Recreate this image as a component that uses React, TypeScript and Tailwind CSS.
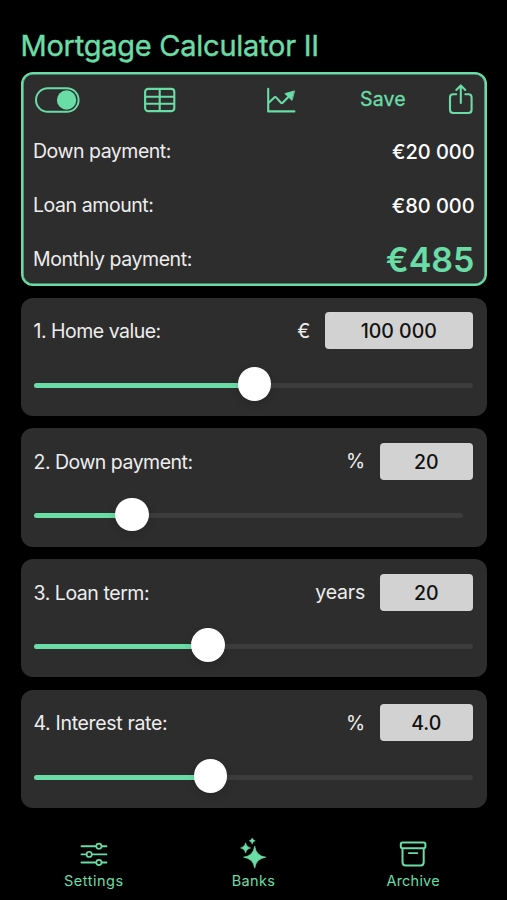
import React from 'react';

const green = '#6adca6';

function ToggleIcon() {
  return (
    <svg width="46" height="30" viewBox="0 0 46 30" fill="none" className="shrink-0">
      <rect x="2" y="3.2" width="42.6" height="23.6" rx="11.8" stroke={green} strokeWidth="2" />
      <circle cx="32.6" cy="15" r="9.7" fill={green} />
    </svg>
  );
}

function TableIcon() {
  return (
    <svg width="34" height="30" viewBox="0 0 34 30" fill="none" stroke={green} strokeWidth="2.1" className="shrink-0">
      <rect x="2.1" y="3.9" width="29.2" height="22.2" rx="3" />
      <path d="M2 11.8H31.5M2 18.8H31.5M16.7 4V26" />
    </svg>
  );
}

function ChartIcon() {
  return (
    <svg width="34" height="30" viewBox="0 0 34 30" fill="none" stroke={green} strokeWidth="2.1" strokeLinecap="round" strokeLinejoin="round" className="shrink-0">
      <path d="M3.2 3.8V26.4H29.4" />
      <path d="M4 17.4L9.3 12.4Q10.2 11.6 11.1 12.4L16 17.8Q16.8 18.6 17.7 17.8L25 10.3" />
      <path d="M29.3 6L19.8 8.6L26.8 15.2Z" fill={green} strokeWidth="0.8" />
    </svg>
  );
}

function ShareIcon() {
  return (
    <svg width="28" height="34" viewBox="0 0 28 34" fill="none" stroke={green} strokeWidth="2.1" strokeLinecap="round" strokeLinejoin="round" className="shrink-0">
      <path d="M9.2 11.2H6.2Q3 11.2 3 14.4V26.8Q3 30 6.2 30H21.4Q24.6 30 24.6 26.8V14.4Q24.6 11.2 21.4 11.2H18.4" />
      <path d="M13.8 20V2.6M9.3 7L13.8 2.4L18.3 7" />
    </svg>
  );
}

function SettingsIcon() {
  return (
    <svg width="28" height="24" viewBox="0 0 28 24" fill="none" stroke={green} strokeWidth="1.9" strokeLinecap="round">
      <path d="M1.5 4.2H16M21.8 4.2H26.4M1.5 12.4H6.3M12 12.4H26.4M1.5 20.5H16M21.8 20.5H26.4" />
      <circle cx="18.9" cy="4.2" r="2.6" strokeWidth="1.6" />
      <circle cx="9.2" cy="12.4" r="2.6" strokeWidth="1.6" />
      <circle cx="18.9" cy="20.5" r="2.6" strokeWidth="1.6" />
    </svg>
  );
}

function BanksIcon() {
  return (
    <svg width="28" height="32" viewBox="0 0 28 32" fill={green}>
      <path d="M15.7 8.2Q17.2 18 26.8 19.2Q17.2 20.4 15.7 30.2Q14.2 20.4 4.6 19.2Q14.2 18 15.7 8.2Z" stroke={green} strokeWidth="0.7" />
      <path d="M6.6 4.6Q7.4 9.1 11.8 9.9Q7.4 10.7 6.6 15.2Q5.8 10.7 1.4 9.9Q5.8 9.1 6.6 4.6Z" stroke={green} strokeWidth="0.4" />
      <path d="M13.2 -0.4Q13.8 2.3 16.4 2.8Q13.8 3.4 13.2 6.2Q12.6 3.4 10 2.8Q12.6 2.3 13.2 -0.4Z" stroke={green} strokeWidth="0.3" />
    </svg>
  );
}

function ArchiveIcon() {
  return (
    <svg width="28" height="26" viewBox="0 0 28 26" fill="none" stroke={green} strokeWidth="2" strokeLinejoin="round">
      <rect x="1.8" y="1.5" width="24.6" height="5.8" rx="1.8" />
      <path d="M3.5 7.3V21.2Q3.5 24.4 6.7 24.4H21.5Q24.7 24.4 24.7 21.2V7.3" />
      <path d="M9.8 12.1H18.4" strokeLinecap="round" strokeWidth="1.8" />
    </svg>
  );
}

type SliderCardProps = {
  label: string;
  labelClass: string;
  unit: string;
  value: string;
  boxClass: string;
  trackClass: string;
  knob: number;
};

function SliderCard({ label, labelClass, unit, value, boxClass, trackClass, knob }: SliderCardProps) {
  return (
    <section className="h-[118.3px] shrink-0 rounded-[12px] bg-[#2d2d2d] pl-[13px] pr-[13.5px] pt-[14.5px]">
      <div className="flex h-[37px] items-center">
        <span className={'pt-[2px] text-[19.5px] text-[#ededed] ' + labelClass}>{label}</span>
        <span className="ml-auto mr-[14.5px] pt-[1px] text-[19.5px] tracking-[-0.2px] text-[#ededed]">{unit}</span>
        <div className={'flex h-[37px] items-center justify-center rounded-[4px] bg-[#d2d2d2] pt-[2px] text-[19.5px] font-medium text-[#111] ' + boxClass}>
          {value}
        </div>
      </div>
      <div className={'mt-[18px] flex h-[33px] items-center ' + trackClass}>
        <div className="mt-[3px] h-[5px] rounded-l-full bg-[#6adca6]" style={{ width: knob - 16 }} />
        <div className="z-10 -mx-px size-[33.5px] shrink-0 rounded-full bg-white shadow-[0_3px_8px_rgba(0,0,0,0.15)]" />
        <div className="mt-[3px] h-[5px] flex-1 rounded-r-full bg-[#3c3c3c]" />
      </div>
    </section>
  );
}

export default function App() {
  return (
    <div className="flex h-[900px] w-[507px] flex-col overflow-hidden whitespace-nowrap bg-black px-[20.5px] pt-[27px] font-['Inter','Liberation_Sans',sans-serif]">
      <h1 className="h-[45px] text-[29px] leading-[37px] tracking-[-0.25px] text-[#6adca6] [-webkit-text-stroke:0.4px_#6adca6]">
        <span>Mortgage Calculator II</span>
      </h1>

      <section className="h-[213.5px] shrink-0 rounded-[12px] border-2 border-[#6adca6] bg-[#2d2d2d] pl-[10.5px] pr-[10px] shadow-[inset_0_0_0_0.6px_#6adca6]">
        <div className="flex h-[50px] items-center pl-[1px] pt-[1px]">
          <ToggleIcon />
          <div className="ml-[63px] flex"><TableIcon /></div>
          <div className="ml-[88px] flex"><ChartIcon /></div>
          <span className="ml-[61px] pt-[1px] text-[19.5px] tracking-[0.15px] text-[#6adca6] [-webkit-text-stroke:0.3px_#6adca6]">Save</span>
          <div className="-mr-[0.5px] ml-auto flex"><ShareIcon /></div>
        </div>
        <div className="flex h-[53.7px] items-center justify-between pt-[2px]">
          <span className="text-[19.5px] tracking-[-0.48px] text-[#ededed]">Down payment:</span>
          <span className="text-[20px] font-medium tracking-[-0.05px] text-white">€20 000</span>
        </div>
        <div className="flex h-[53.7px] items-center justify-between pt-[2px]">
          <span className="text-[19.5px] tracking-[-0.43px] text-[#ededed]">Loan amount:</span>
          <span className="text-[20px] font-medium tracking-[-0.05px] text-white">€80 000</span>
        </div>
        <div className="flex h-[53.7px] items-center justify-between pt-[2px]">
          <span className="text-[19.5px] tracking-[-0.43px] text-[#ededed]">Monthly payment:</span>
          <span className="text-[34px] font-semibold text-[#6adca6]">€485</span>
        </div>
      </section>

      <main className="mt-[12.3px] flex flex-col gap-[12.4px]">
        <SliderCard label="1. Home value:" labelClass="tracking-[-0.5px]" unit="€" value="100 000" boxClass="w-[148.5px]" trackClass="" knob={221} />
        <SliderCard label="2. Down payment:" labelClass="tracking-[-0.5px]" unit="%" value="20" boxClass="w-[93.5px]" trackClass="mr-[10px]" knob={98.5} />
        <SliderCard label="3. Loan term:" labelClass="tracking-[-0.45px]" unit="years" value="20" boxClass="w-[93.5px]" trackClass="" knob={174.5} />
        <SliderCard label="4. Interest rate:" labelClass="tracking-[-0.33px]" unit="%" value="4.0" boxClass="w-[93.5px]" trackClass="" knob={177} />
      </main>

      <nav className="-mx-[6.5px] mt-[28.5px] grid grid-cols-3 text-[14.5px] leading-[18px] text-[#6adca6]">
        <div className="flex flex-col items-center">
          <div className="flex h-[35px] items-center"><SettingsIcon /></div>
          <span className="tracking-[0.5px]">Settings</span>
        </div>
        <div className="flex flex-col items-center">
          <div className="flex h-[35px] items-center"><BanksIcon /></div>
          <span className="tracking-[0.3px]">Banks</span>
        </div>
        <div className="flex flex-col items-center">
          <div className="flex h-[35px] items-center"><ArchiveIcon /></div>
          <span className="tracking-[0.2px]">Archive</span>
        </div>
      </nav>
    </div>
  );
}
